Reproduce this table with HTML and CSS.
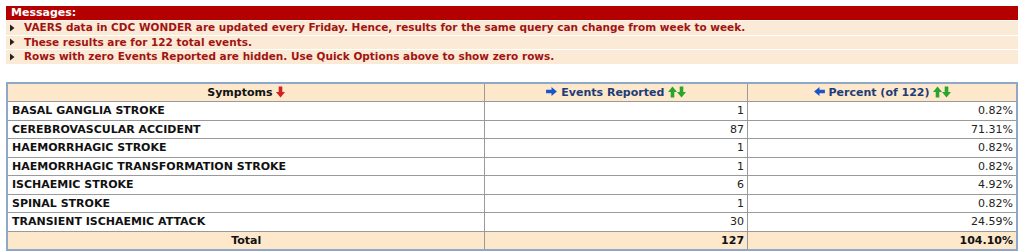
FILE: index.html
```html
<!DOCTYPE html>
<html>
<head>
<meta charset="utf-8">
<link rel="stylesheet" href="styles.css">
</head>
<body>
<div class="page">
  <div class="messages">
    <div class="msg-head">Messages:</div>
    <div class="msg"><svg class="bullet" viewBox="0 0 6 8"><path d="M1 0.5 L5.5 4 L1 7.5 Z"/></svg>VAERS data in CDC WONDER are updated every Friday. Hence, results for the same query can change from week to week.</div>
    <div class="msg"><svg class="bullet" viewBox="0 0 6 8"><path d="M1 0.5 L5.5 4 L1 7.5 Z"/></svg>These results are for 122 total events.</div>
    <div class="msg"><svg class="bullet" viewBox="0 0 6 8"><path d="M1 0.5 L5.5 4 L1 7.5 Z"/></svg>Rows with zero Events Reported are hidden. Use Quick Options above to show zero rows.</div>
  </div>
  <table class="results">
    <colgroup><col class="c1"><col class="c2"><col class="c3"></colgroup>
    <thead>
      <tr>
        <th class="sym">Symptoms <svg class="ico" viewBox="0 0 10 12"><path fill="#d42020" d="M3 0 H7 V6 H10 L5 12 L0 6 H3 Z"/></svg></th>
        <th class="blue"><svg class="ico-h" viewBox="0 0 12 10"><path fill="#1a55c8" d="M0 3 H6 V0 L12 5 L6 10 V7 H0 Z"/></svg> Events Reported <svg class="ico" viewBox="0 0 10 12"><path fill="#2aa52a" d="M3 12 H7 V6 H10 L5 0 L0 6 H3 Z"/></svg><svg class="ico" viewBox="0 0 10 12"><path fill="#2aa52a" d="M3 0 H7 V6 H10 L5 12 L0 6 H3 Z"/></svg></th>
        <th class="blue"><svg class="ico-h" viewBox="0 0 12 10"><path fill="#1a55c8" d="M12 3 H6 V0 L0 5 L6 10 V7 H12 Z"/></svg> Percent (of 122) <svg class="ico" viewBox="0 0 10 12"><path fill="#2aa52a" d="M3 12 H7 V6 H10 L5 0 L0 6 H3 Z"/></svg><svg class="ico" viewBox="0 0 10 12"><path fill="#2aa52a" d="M3 0 H7 V6 H10 L5 12 L0 6 H3 Z"/></svg></th>
      </tr>
    </thead>
    <tbody>
      <tr><td class="name">BASAL GANGLIA STROKE</td><td class="num">1</td><td class="num">0.82%</td></tr>
      <tr><td class="name">CEREBROVASCULAR ACCIDENT</td><td class="num">87</td><td class="num">71.31%</td></tr>
      <tr><td class="name">HAEMORRHAGIC STROKE</td><td class="num">1</td><td class="num">0.82%</td></tr>
      <tr><td class="name">HAEMORRHAGIC TRANSFORMATION STROKE</td><td class="num">1</td><td class="num">0.82%</td></tr>
      <tr><td class="name">ISCHAEMIC STROKE</td><td class="num">6</td><td class="num">4.92%</td></tr>
      <tr><td class="name">SPINAL STROKE</td><td class="num">1</td><td class="num">0.82%</td></tr>
      <tr><td class="name">TRANSIENT ISCHAEMIC ATTACK</td><td class="num">30</td><td class="num">24.59%</td></tr>
    </tbody>
    <tfoot>
      <tr><td class="total-label">Total</td><td class="num total">127</td><td class="num total">104.10%</td></tr>
    </tfoot>
  </table>
</div>
</body>
</html>
```

FILE: styles.css
```css
html, body {
  margin: 0;
  padding: 0;
  background: #ffffff;
}
.page {
  padding: 6px;
  font-family: "DejaVu Sans", Verdana, sans-serif;
  font-size: 11px;
  width: 1012px;
}
.messages {
  display: flex;
  flex-direction: column;
  gap: 1px;
  margin-bottom: 18px;
  font-size: 10.5px;
}
.msg-head {
  background: #b50000;
  color: #ffffff;
  font-weight: bold;
  font-size: 11px;
  height: 14px;
  line-height: 14px;
  padding-left: 5px;
}
.msg {
  background: #fbead6;
  color: #a11414;
  font-weight: bold;
  height: 13.5px;
  line-height: 13px;
  display: flex;
  align-items: center;
  padding-left: 3px;
}
.bullet {
  width: 6px;
  height: 8px;
  margin-right: 9px;
  fill: #222222;
}
.results {
  width: 1012px;
  border-collapse: collapse;
  border: 2px solid #90a8c8;
}
.c1 { width: 478px; }
.c2 { width: 264px; }
.c3 { width: 270px; }
.results th, .results td {
  border: 1px solid #9a9a9a;
  height: 18.5px;
  padding: 0 3px 0 4px;
  line-height: 13px;
  box-sizing: border-box;
}
.results th {
  background: #fde8cb;
  font-weight: bold;
  text-align: center;
  color: #111111;
  height: 19px;
}
.results th.blue {
  color: #1d3c78;
}
.ico {
  width: 9px;
  height: 12px;
  vertical-align: -2px;
}
.ico-h {
  width: 11px;
  height: 9px;
  vertical-align: 0;
}
.name {
  font-weight: bold;
  color: #111111;
}
.num {
  text-align: right;
  color: #222222;
}
tfoot td {
  background: #fde8cb;
}
.total-label {
  text-align: center;
  font-weight: bold;
  color: #111111;
}
.total {
  font-weight: bold;
  color: #111111;
}
```
